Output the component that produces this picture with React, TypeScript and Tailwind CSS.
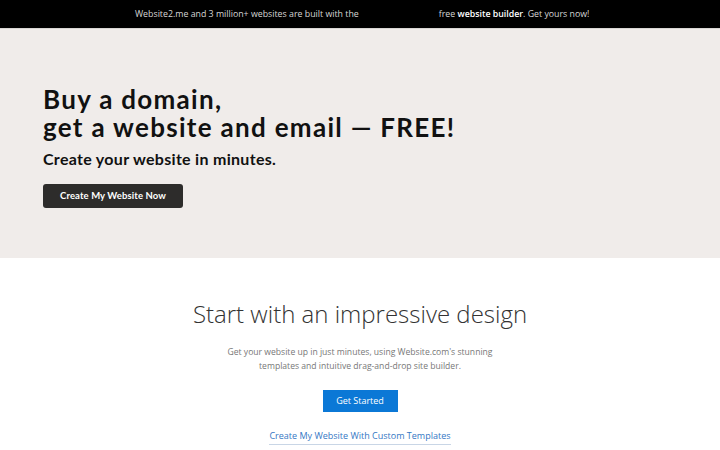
export default function App() {
  return (
    <main className="min-h-screen w-full bg-white font-['Open_Sans',sans-serif]">
      <div className="flex h-[28px] items-center bg-black pt-px text-[8.8px] text-[#d6d6d6]">
        <span className="ml-[135px]">Website2.me and 3 million+ websites are built with the</span>
        <span className="ml-[80px]">
          free <b className="font-semibold text-white">website builder</b>. Get yours now!
        </span>
      </div>
      <div className="h-px bg-[#d9d6d4]" />

      <section className="h-[229px] bg-[#f0ecea] px-[43px] pt-[56px] font-['Lato',sans-serif] text-[#111]">
        <h1 className="text-[26px] font-bold leading-[28px] tracking-[1.3px]">
          Buy a domain,
          <br />
          get a website and email — FREE!
        </h1>
        <p className="mt-[8px] text-[16px] font-bold leading-[20px] tracking-[0.3px]">
          Create your website in minutes.
        </p>
        <button className="mt-[15px] flex h-[24px] w-[140px] items-center justify-center rounded-[3px] bg-[#2d2c2b] text-[9.5px] font-bold tracking-[0.1px] text-white">
          Create My Website Now
        </button>
      </section>

      <section className="flex flex-col items-center pt-[39px]">
        <h2 className="text-[24px] font-light leading-[34px] text-[#333]">
          Start with an impressive design
        </h2>
        <p className="mt-[14px] text-center text-[8.6px] leading-[14px] text-[#777]">
          Get your website up in just minutes, using Website.com's stunning
          <br />
          templates and intuitive drag-and-drop site builder.
        </p>
        <button className="mt-[17px] flex h-[22px] w-[75px] items-center justify-center bg-[#0b78d6] text-[9px] text-white">
          Get Started
        </button>
        <a className="mt-[17px] border-b border-[#c9d6e6] pb-px text-[9px] text-[#3477c4]">
          Create My Website With Custom Templates
        </a>
      </section>
    </main>
  );
}
